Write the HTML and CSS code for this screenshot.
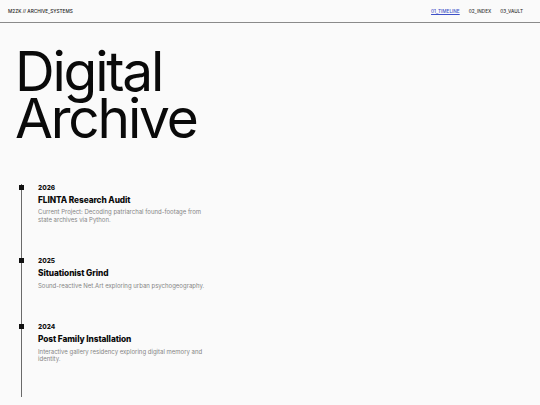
FILE: index.html
```html
<!DOCTYPE html>
<html lang="en">
<head>
<meta charset="utf-8">
<title>Digital Archive</title>
<link rel="stylesheet" href="styles.css">
</head>
<body>
<header class="topbar">
  <div class="brand">M2ZK // ARCHIVE_SYSTEMS</div>
  <nav class="nav">
    <a class="nav-link active" href="#">01_TIMELINE</a>
    <a class="nav-link" href="#">02_INDEX</a>
    <a class="nav-link" href="#">03_VAULT</a>
  </nav>
</header>
<main class="main">
  <h1 class="hero"><span class="hero-line">Digital</span><span class="hero-line">Archive</span></h1>
  <ol class="timeline">
    <li class="entry">
      <div class="year">2026</div>
      <h2 class="entry-title">FLINTA Research Audit</h2>
      <p class="entry-desc">Current Project: Decoding patriarchal found-footage from state archives via Python.</p>
    </li>
    <li class="entry">
      <div class="year">2025</div>
      <h2 class="entry-title">Situationist Grind</h2>
      <p class="entry-desc">Sound-reactive Net.Art exploring urban psychogeography.</p>
    </li>
    <li class="entry">
      <div class="year">2024</div>
      <h2 class="entry-title">Post Family Installation</h2>
      <p class="entry-desc">Interactive gallery residency exploring digital memory and identity.</p>
    </li>
  </ol>
</main>
</body>
</html>
```
FILE: styles.css
```css
* { box-sizing: border-box; }
html, body { margin: 0; padding: 0; }
body {
  background: #fafafa;
  color: #111;
  font-family: Inter, "Liberation Sans", sans-serif;
}
.topbar {
  height: 23px;
  display: flex;
  align-items: center;
  justify-content: space-between;
  padding: 0 17px 0 8px;
  border-bottom: 1px solid #8a8a8a;
}
.brand {
  font-size: 4.7px;
  font-weight: 500;
  color: #222;
}
.nav {
  display: flex;
  gap: 9px;
}
.nav-link {
  font-size: 4.7px;
  font-weight: 500;
  color: #333;
  text-decoration: none;
}
.nav-link.active {
  color: #3d50c8;
  text-decoration: underline;
}
.main {
  padding: 0 15px;
}
.hero {
  margin: 25px 0 0;
  font-size: 55px;
  font-weight: 400;
  line-height: 0.85;
  letter-spacing: -0.04em;
  color: #0a0a0a;
}
.hero-line {
  display: block;
}
.timeline {
  list-style: none;
  margin: 42px 0 0 6px;
  padding: 0;
  border-left: 1px solid #6a6a6a;
  width: 200px;
}
.entry {
  position: relative;
  padding: 0 0 34px 16px;
}
.entry:last-child {
  padding-bottom: 34px;
}
.entry::before {
  content: "";
  position: absolute;
  left: -3px;
  top: 1px;
  width: 5px;
  height: 5px;
  background: #111;
}
.year {
  font-size: 6.5px;
  line-height: 8px;
  font-weight: 800;
  color: #111;
}
.entry-title {
  margin: 3px 0 0;
  font-size: 8.3px;
  line-height: 10px;
  font-weight: 800;
  letter-spacing: -0.01em;
  color: #0a0a0a;
}
.entry-desc {
  margin: 3.5px 0 0;
  max-width: 175px;
  font-size: 6px;
  line-height: 7.5px;
  color: #858585;
}
```
